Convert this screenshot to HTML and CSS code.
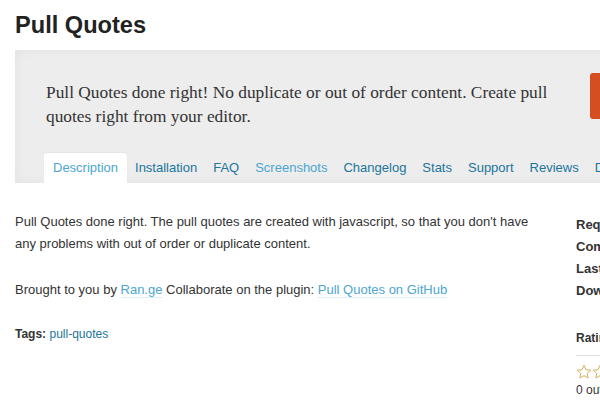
FILE: index.html
```html
<!DOCTYPE html>
<html>
<head>
<meta charset="utf-8">
<link rel="stylesheet" href="styles.css">
</head>
<body>
<div class="page">
  <h1 class="title">Pull Quotes</h1>
  <div class="banner">
    <div class="banner-top">
      <p class="short">Pull Quotes done right! No duplicate or out of order content. Create pull quotes right from your editor.</p>
      <div class="download"></div>
    </div>
    <nav class="tabs">
      <a class="tab active">Description</a>
      <a class="tab">Installation</a>
      <a class="tab">FAQ</a>
      <a class="tab light">Screenshots</a>
      <a class="tab">Changelog</a>
      <a class="tab">Stats</a>
      <a class="tab">Support</a>
      <a class="tab">Reviews</a>
      <a class="tab">Developers</a>
    </nav>
  </div>
  <div class="content">
    <div class="main">
      <p>Pull Quotes done right. The pull quotes are created with javascript, so that you don't have any problems with out of order or duplicate content.</p>
      <p>Brought to you by <a class="link">Ran.ge</a> Collaborate on the plugin: <a class="link">Pull Quotes on GitHub</a></p>
      <p class="tags"><strong>Tags:</strong> <a class="tag">pull-quotes</a></p>
    </div>
    <aside class="side">
      <div class="meta">Requires: 3.0 or higher</div>
      <div class="meta">Compatible up to: 3.5.1</div>
      <div class="meta">Last Updated: 2013-1-30</div>
      <div class="meta">Downloads: 1,024</div>
      <div class="rating-head">Ratings</div>
      <div class="stars">
        <svg width="16" height="16" viewBox="0 0 24 24"><path d="M12 2l3 6.6 7.1.7-5.4 4.8 1.6 7L12 17.4l-6.3 3.7 1.6-7L1.9 9.3 9 8.6z" fill="none" stroke="#d4b35f" stroke-width="1.5" stroke-linejoin="round"/></svg>
        <svg width="16" height="16" viewBox="0 0 24 24"><path d="M12 2l3 6.6 7.1.7-5.4 4.8 1.6 7L12 17.4l-6.3 3.7 1.6-7L1.9 9.3 9 8.6z" fill="none" stroke="#d4b35f" stroke-width="1.5" stroke-linejoin="round"/></svg>
      </div>
      <div class="out">0 out of 5 stars</div>
    </aside>
  </div>
</div>
</body>
</html>
```

FILE: styles.css
```css
html, body {
  margin: 0;
  padding: 0;
  background: #fff;
  overflow: hidden;
}
.page {
  width: 800px;
  padding-left: 15px;
  font-family: "Liberation Sans", Arial, sans-serif;
  color: #333;
}
.title {
  margin: 0;
  padding-top: 11px;
  height: 39px;
  font-size: 23.6px;
  font-weight: bold;
  color: #222;
  line-height: 28px;
}
.banner {
  width: 785px;
  height: 133px;
  background: #ededed;
  box-shadow: inset 0 0 12px rgba(0,0,0,0.05);
  display: flex;
  flex-direction: column;
  justify-content: space-between;
}
.banner-top {
  display: flex;
  align-items: flex-start;
  padding: 23px 0 0 31px;
}
.short {
  margin: 8px 0 0 0;
  width: 520px;
  font-family: "Liberation Serif", "DejaVu Serif", serif;
  font-size: 17.35px;
  line-height: 24px;
  color: #333;
}
.download {
  margin-left: 24px;
  width: 60px;
  height: 46px;
  background: #d54e21;
  border-radius: 3px;
}
.tabs {
  display: flex;
  padding-left: 29px;
  height: 30px;
}
.tab {
  padding: 0 8px;
  font-size: 13px;
  line-height: 30px;
  color: #21759b;
  white-space: nowrap;
}
.tab.active {
  background: #fff;
  color: #4ca6cf;
  border-radius: 3px 3px 0 0;
  padding: 0 9px;
  box-shadow: 0 -1px 2px rgba(0,0,0,0.04);
}
.tab.light { color: #4ca6cf; }
.content {
  display: flex;
  padding-top: 28px;
}
.main {
  width: 530px;
  margin-right: 31px;
  font-size: 13px;
  line-height: 22px;
  color: #333;
}
.main p {
  margin: 0 0 24px 0;
}
.link {
  color: #4ca6cf;
  border-bottom: 1px solid #dfeef5;
}
.main .tags {
  font-size: 12px;
  line-height: 18px;
}
.tags strong { color: #333; }
.tag { color: #21759b; }
.side {
  padding-top: 3px;
  font-size: 13px;
  line-height: 22px;
  white-space: nowrap;
}
.meta {
  font-weight: bold;
  color: #333;
}
.rating-head {
  margin-top: 25px;
  font-size: 12px;
  font-weight: bold;
  padding-bottom: 6px;
  border-bottom: 1px solid #ddd;
  width: 200px;
}
.stars {
  margin-top: 8px;
  display: flex;
  gap: 0;
  height: 16px;
}
.out {
  font-size: 12px;
  line-height: 20px;
}
```
